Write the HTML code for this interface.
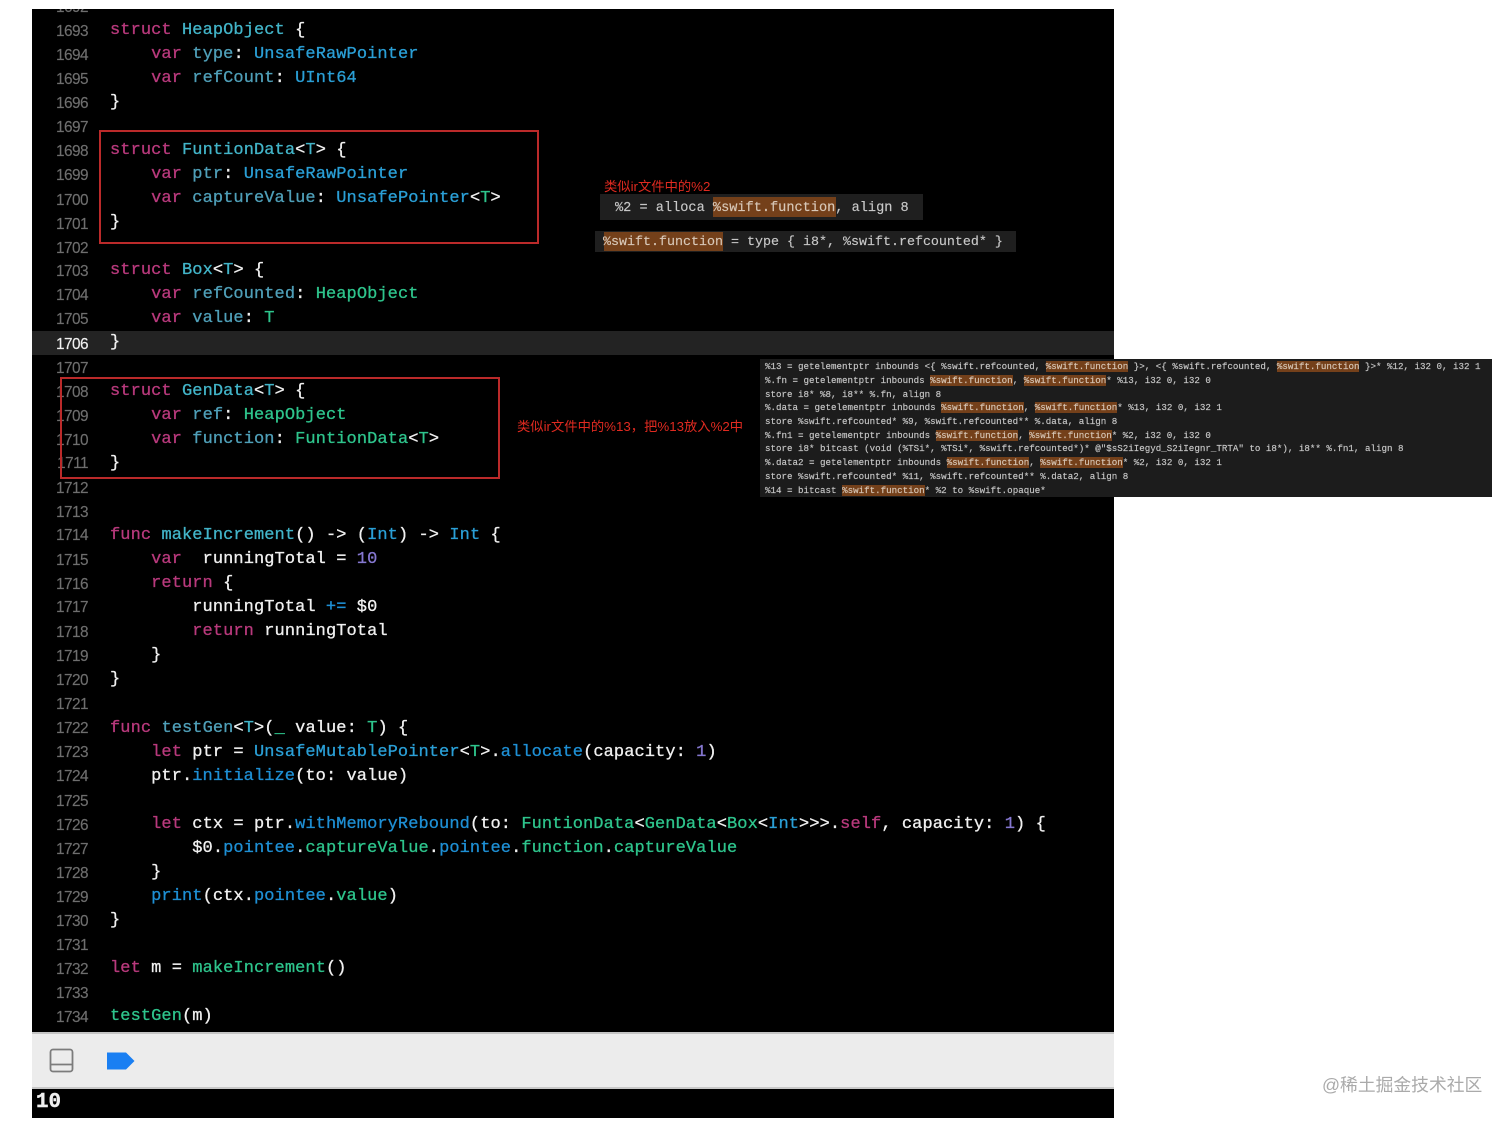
<!DOCTYPE html>
<html>
<head>
<meta charset="utf-8">
<style>
html,body{margin:0;padding:0;background:#fff;width:1512px;height:1125px;overflow:hidden}
#p{position:relative;width:1512px;height:1125px;overflow:hidden;background:#fff}
#ed{position:absolute;left:32px;top:9px;width:1082px;height:1024px;background:#000;overflow:hidden}
#in{position:absolute;left:-32px;top:-9px;width:1512px;height:1125px;filter:blur(.35px)}
.l,.n{position:absolute;height:24px;line-height:24px;white-space:pre}
.l{left:110px;margin-top:2px;font:17px/24px "Liberation Mono",monospace;letter-spacing:.08px;color:#f0f0f0;-webkit-text-stroke:.3px}
.n{left:40px;width:48px;margin-top:1px;text-align:right;font:15.4px/24px "Liberation Sans",sans-serif;letter-spacing:-.55px;color:#6e6e6e;-webkit-text-stroke:.15px}
.k{color:#b8397c}.t{color:#2a9fd6}.g{color:#2ec48c}.d{color:#4f9fb8}.c{color:#42b4c8}.u{color:#8577d0}.f{color:#1e8fd4}
.box{position:absolute;box-sizing:border-box;border:2px solid #bb2a2a}
.r{position:absolute;color:#e02a20;font:13.3px/16px "Liberation Sans","Noto Sans CJK SC",sans-serif;white-space:pre;filter:blur(.25px)}
.s{position:absolute;white-space:pre;font-family:"Liberation Mono",monospace;color:#c8c8c8;filter:blur(.3px);-webkit-text-stroke:.15px}
.h{background:#74401a;color:#d8c8b8}
.x{color:#d8c8b8}
.m{left:765px;font-size:9.18px;line-height:13.7px;height:13.7px;margin-top:1px}
</style>
</head>
<body>
<div id="p">
<div id="ed"><div id="in">
<div style="position:absolute;left:32px;top:331px;width:1082px;height:24px;background:#232323"></div>
<div class="n" style="top:-5px">1692</div>
<div class="n" style="top:19px">1693</div>
<div class="n" style="top:43px">1694</div>
<div class="n" style="top:67px">1695</div>
<div class="n" style="top:91px">1696</div>
<div class="n" style="top:115px">1697</div>
<div class="n" style="top:139px">1698</div>
<div class="n" style="top:163px">1699</div>
<div class="n" style="top:188px">1700</div>
<div class="n" style="top:212px">1701</div>
<div class="n" style="top:236px">1702</div>
<div class="n" style="top:259px">1703</div>
<div class="n" style="top:283px">1704</div>
<div class="n" style="top:307px">1705</div>
<div class="n" style="top:332px;color:#f0f0f0">1706</div>
<div class="n" style="top:356px">1707</div>
<div class="n" style="top:380px">1708</div>
<div class="n" style="top:404px">1709</div>
<div class="n" style="top:428px">1710</div>
<div class="n" style="top:451px">1711</div>
<div class="n" style="top:476px">1712</div>
<div class="n" style="top:500px">1713</div>
<div class="n" style="top:523px">1714</div>
<div class="n" style="top:548px">1715</div>
<div class="n" style="top:572px">1716</div>
<div class="n" style="top:595px">1717</div>
<div class="n" style="top:620px">1718</div>
<div class="n" style="top:644px">1719</div>
<div class="n" style="top:668px">1720</div>
<div class="n" style="top:692px">1721</div>
<div class="n" style="top:716px">1722</div>
<div class="n" style="top:740px">1723</div>
<div class="n" style="top:764px">1724</div>
<div class="n" style="top:789px">1725</div>
<div class="n" style="top:813px">1726</div>
<div class="n" style="top:837px">1727</div>
<div class="n" style="top:861px">1728</div>
<div class="n" style="top:885px">1729</div>
<div class="n" style="top:909px">1730</div>
<div class="n" style="top:933px">1731</div>
<div class="n" style="top:957px">1732</div>
<div class="n" style="top:981px">1733</div>
<div class="n" style="top:1005px">1734</div>

<div class="l" style="top:17px"><span class="k">struct</span> <span class="c">HeapObject</span> {</div>
<div class="l" style="top:41px">    <span class="k">var</span> <span class="d">type</span>: <span class="t">UnsafeRawPointer</span></div>
<div class="l" style="top:65px">    <span class="k">var</span> <span class="d">refCount</span>: <span class="t">UInt64</span></div>
<div class="l" style="top:89px">}</div>
<div class="l" style="top:137px"><span class="k">struct</span> <span class="c">FuntionData</span>&lt;<span class="c">T</span>&gt; {</div>
<div class="l" style="top:161px">    <span class="k">var</span> <span class="d">ptr</span>: <span class="t">UnsafeRawPointer</span></div>
<div class="l" style="top:185px">    <span class="k">var</span> <span class="d">captureValue</span>: <span class="t">UnsafePointer</span>&lt;<span class="g">T</span>&gt;</div>
<div class="l" style="top:209px">}</div>
<div class="l" style="top:257px"><span class="k">struct</span> <span class="c">Box</span>&lt;<span class="c">T</span>&gt; {</div>
<div class="l" style="top:281px">    <span class="k">var</span> <span class="d">refCounted</span>: <span class="g">HeapObject</span></div>
<div class="l" style="top:305px">    <span class="k">var</span> <span class="d">value</span>: <span class="g">T</span></div>
<div class="l" style="top:329px">}</div>
<div class="l" style="top:378px"><span class="k">struct</span> <span class="c">GenData</span>&lt;<span class="c">T</span>&gt; {</div>
<div class="l" style="top:402px">    <span class="k">var</span> <span class="d">ref</span>: <span class="g">HeapObject</span></div>
<div class="l" style="top:426px">    <span class="k">var</span> <span class="d">function</span>: <span class="g">FuntionData</span>&lt;<span class="g">T</span>&gt;</div>
<div class="l" style="top:450px">}</div>
<div class="l" style="top:522px"><span class="k">func</span> <span class="c">makeIncrement</span>() -&gt; (<span class="t">Int</span>) -&gt; <span class="t">Int</span> {</div>
<div class="l" style="top:546px">    <span class="k">var</span>  runningTotal = <span class="u">10</span></div>
<div class="l" style="top:570px">    <span class="k">return</span> {</div>
<div class="l" style="top:594px">        runningTotal <span class="f">+=</span> $0</div>
<div class="l" style="top:618px">        <span class="k">return</span> runningTotal</div>
<div class="l" style="top:642px">    }</div>
<div class="l" style="top:666px">}</div>
<div class="l" style="top:715px"><span class="k">func</span> <span class="d">testGen</span>&lt;<span class="c">T</span>&gt;(<span class="g">_</span> value: <span class="g">T</span>) {</div>
<div class="l" style="top:739px">    <span class="k">let</span> ptr = <span class="t">UnsafeMutablePointer</span>&lt;<span class="g">T</span>&gt;.<span class="f">allocate</span>(capacity: <span class="u">1</span>)</div>
<div class="l" style="top:763px">    ptr.<span class="f">initialize</span>(to: value)</div>
<div class="l" style="top:811px">    <span class="k">let</span> ctx = ptr.<span class="f">withMemoryRebound</span>(to: <span class="g">FuntionData</span>&lt;<span class="g">GenData</span>&lt;<span class="g">Box</span>&lt;<span class="t">Int</span>&gt;&gt;&gt;.<span class="k">self</span>, capacity: <span class="u">1</span>) {</div>
<div class="l" style="top:835px">        $0.<span class="f">pointee</span>.<span class="g">captureValue</span>.<span class="f">pointee</span>.<span class="g">function</span>.<span class="g">captureValue</span></div>
<div class="l" style="top:859px">    }</div>
<div class="l" style="top:883px">    <span class="f">print</span>(ctx.<span class="f">pointee</span>.<span class="g">value</span>)</div>
<div class="l" style="top:907px">}</div>
<div class="l" style="top:955px"><span class="k">let</span> m = <span class="g">makeIncrement</span>()</div>
<div class="l" style="top:1003px"><span class="g">testGen</span>(m)</div>
</div></div>

<div class="box" style="left:99px;top:130px;width:440px;height:114px"></div>
<div class="box" style="left:60px;top:377px;width:440px;height:102px"></div>

<div style="position:absolute;left:600px;top:194px;width:323px;height:26px;background:#1f1f1f"></div>
<div style="position:absolute;left:713px;top:197px;width:123px;height:20px;background:#74401a"></div>
<div class="s" style="left:615px;top:199px;font-size:13.6px;line-height:19px">%2 = alloca <span class="x">%swift.function</span>, align 8</div>
<div style="position:absolute;left:595px;top:231px;width:421px;height:21px;background:#1f1f1f"></div>
<div style="position:absolute;left:604px;top:232px;width:119px;height:19px;background:#74401a"></div>
<div class="s" style="left:603px;top:233px;font-size:13.33px;line-height:20px"><span class="x">%swift.function</span> = type { i8*, %swift.refcounted* }</div>

<div class="r" style="left:604px;top:179px">类似ir文件中的%2</div>
<div class="r" style="left:517px;top:419px">类似ir文件中的%13，把%13放入%2中</div>

<div style="position:absolute;left:760px;top:359px;width:732px;height:138px;background:#1c1c1c"></div>
<div class="s m" style="top:359px">%13 = getelementptr inbounds &lt;{ %swift.refcounted, <span class="h">%swift.function</span> }&gt;, &lt;{ %swift.refcounted, <span class="h">%swift.function</span> }&gt;* %12, i32 0, i32 1</div>
<div class="s m" style="top:373px">%.fn = getelementptr inbounds <span class="h">%swift.function</span>, <span class="h">%swift.function</span>* %13, i32 0, i32 0</div>
<div class="s m" style="top:387px">store i8* %8, i8** %.fn, align 8</div>
<div class="s m" style="top:400px">%.data = getelementptr inbounds <span class="h">%swift.function</span>, <span class="h">%swift.function</span>* %13, i32 0, i32 1</div>
<div class="s m" style="top:414px">store %swift.refcounted* %9, %swift.refcounted** %.data, align 8</div>
<div class="s m" style="top:428px">%.fn1 = getelementptr inbounds <span class="h">%swift.function</span>, <span class="h">%swift.function</span>* %2, i32 0, i32 0</div>
<div class="s m" style="top:441px">store i8* bitcast (void (%TSi*, %TSi*, %swift.refcounted*)* @"$sS2iIegyd_S2iIegnr_TRTA" to i8*), i8** %.fn1, align 8</div>
<div class="s m" style="top:455px">%.data2 = getelementptr inbounds <span class="h">%swift.function</span>, <span class="h">%swift.function</span>* %2, i32 0, i32 1</div>
<div class="s m" style="top:469px">store %swift.refcounted* %11, %swift.refcounted** %.data2, align 8</div>
<div class="s m" style="top:483px">%14 = bitcast <span class="h">%swift.function</span>* %2 to %swift.opaque*</div>

<div style="position:absolute;left:32px;top:1032px;width:1082px;height:2px;background:#c4c4c4"></div>
<div style="position:absolute;left:32px;top:1034px;width:1082px;height:53px;background:#ececec"></div>
<div style="position:absolute;left:32px;top:1087px;width:1082px;height:2px;background:#c8c8c8"></div>
<div style="position:absolute;left:32px;top:1089px;width:1082px;height:29px;background:#000"></div>
<svg style="position:absolute;left:48px;top:1047px" width="28" height="28" viewBox="0 0 28 28"><rect x="2.500" y="2.500" width="22" height="22" rx="2.500" fill="none" stroke="#7c7c7c" stroke-width="1.800"/><path d="M2.500 17.500H24.500" stroke="#7c7c7c" stroke-width="1.800"/></svg>
<svg style="position:absolute;left:106px;top:1051px" width="30" height="20" viewBox="0 0 30 20"><path d="M1 1.500H20L28.500 10L20 18.500H1Z" fill="#1a7ff2"/></svg>
<div style="position:absolute;left:36px;top:1090px;font:bold 20.8px/25px 'Liberation Mono',monospace;color:#f0f0f0;filter:blur(.3px);-webkit-text-stroke:.4px">10</div>

<div style="position:absolute;left:1322px;top:1073px;font:17.8px/24px 'Liberation Sans','Noto Sans CJK SC',sans-serif;color:#aaa;white-space:pre;filter:blur(.3px)">@稀土掘金技术社区</div>
</div>
</body>
</html>
